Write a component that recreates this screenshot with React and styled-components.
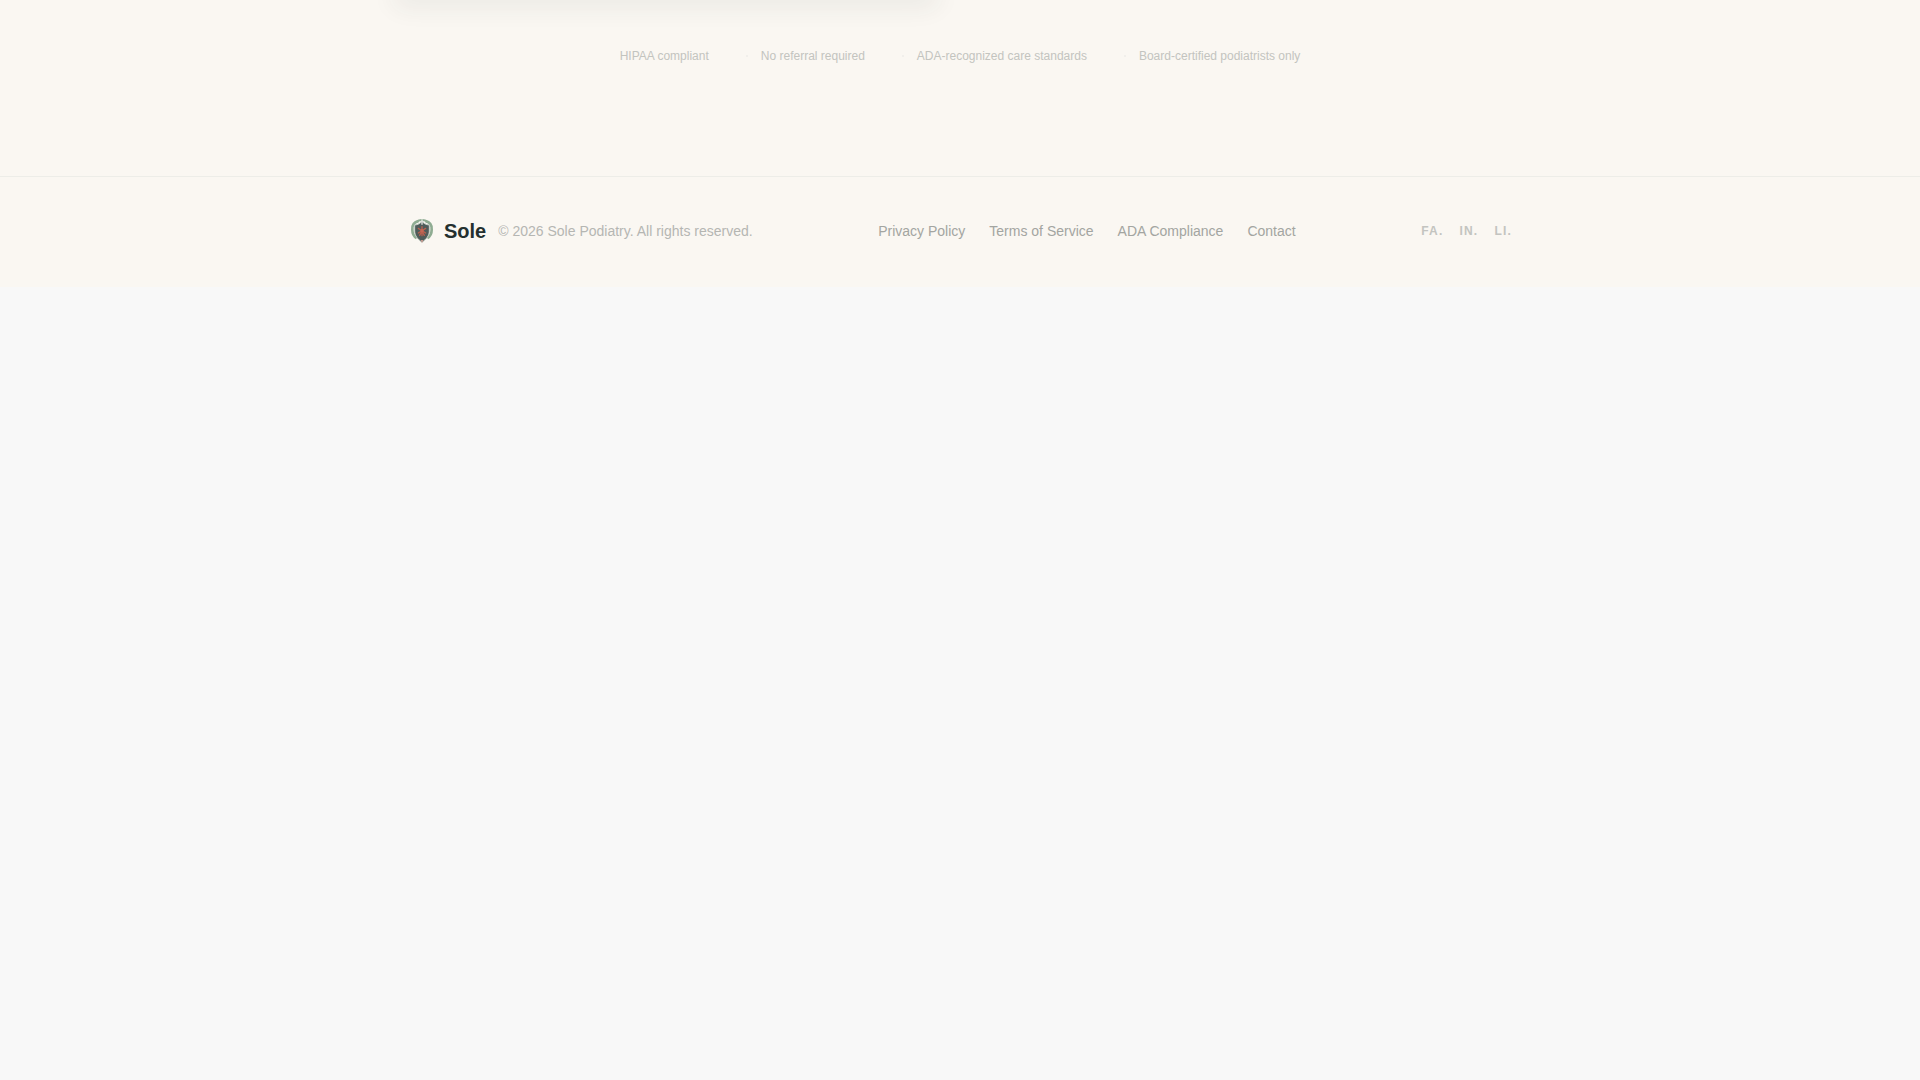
import React from "react";
import styled, { createGlobalStyle } from "styled-components";

const Global = createGlobalStyle`
  * { box-sizing: border-box; }
  body {
    margin: 0;
    background: #f8f8f8;
    font-family: "Liberation Sans", Arial, sans-serif;
    -webkit-font-smoothing: antialiased;
  }
`;

const Section = styled.section`
  background: #faf7f2;
  padding-bottom: 112px;
  overflow: hidden;
`;

const Container = styled.div`
  max-width: 1200px;
  margin: 0 auto;
  padding: 0 48px;
`;

const CardGrid = styled.div`
  display: grid;
  grid-template-columns: 1fr 1fr;
  gap: 40px;
  margin: 0 -16px;
`;

const Card = styled.div`
  height: 24px;
  margin-top: -32px;
  border-radius: 24px;
  background: #ffffff;
  box-shadow: 0 16px 24px rgba(45, 62, 58, 0.07);
`;

const TrustList = styled.ul`
  display: flex;
  justify-content: center;
  gap: 37px;
  margin: 48px 0 0;
  padding: 0;
  list-style: none;
`;

const TrustItem = styled.li`
  display: flex;
  align-items: center;
  font-size: 12px;
  line-height: 16px;
  color: #c3c4bf;

  & + &::before {
    content: "";
    width: 2px;
    height: 2px;
    margin-right: 13px;
    border-radius: 1px;
    background: #eeede8;
  }
`;

const Footer = styled.footer`
  background: #faf7f2;
  border-top: 1px solid #edede8;
  padding: 40px 0 42px;
`;

const FooterRow = styled(Container)`
  display: flex;
  align-items: center;
  justify-content: space-between;
`;

const Brand = styled.div`
  display: flex;
  align-items: center;
  gap: 12px;
`;

const Home = styled.a`
  display: flex;
  align-items: center;
  gap: 8px;
  color: #24302f;
  font-size: 20px;
  line-height: 28px;
  font-weight: 700;
  text-decoration: none;
`;

const Copyright = styled.span`
  font-size: 14px;
  line-height: 20px;
  color: #b5b6b2;
`;

const Links = styled.nav`
  display: flex;
  gap: ${(p) => p.$gap};
`;

const FooterLink = styled.a`
  font-size: 14px;
  line-height: 20px;
  color: #a3a5a1;
  text-decoration: none;
`;

const SocialLink = styled.a`
  font-size: 12px;
  line-height: 16px;
  font-weight: 700;
  letter-spacing: 0.1em;
  color: #c3c4c0;
  text-decoration: none;
`;

const Logo = () => (
  <svg width="28" height="28" viewBox="0 0 84 84" aria-hidden="true">
    <path d="M32 12 C18 15 12 25 13 38 C13 49 17 58 26 63" fill="none" stroke="#8fac92" strokeWidth="8" />
    <path d="M52 12 C66 15 72 25 71 38 C71 49 67 58 58 63" fill="none" stroke="#8fac92" strokeWidth="8" />
    <path d="M24 17 C29 10 35 9 42 9 C49 9 55 10 60 17" fill="none" stroke="#8fac92" strokeWidth="6" />
    <path
      d="M42 13 C47 20 54 23 64 24 V42 C64 57 54 67 42 76 C30 67 20 57 20 42 V24 C30 23 37 20 42 13 Z"
      fill="#4f5c5a"
      stroke="#c9d1c8"
      strokeWidth="3"
    />
    <path d="M42 29 V56 M31 34 L53 48 M53 34 L31 48 M42 42 L35 55 M42 42 L49 55" fill="none" stroke="#b9604f" strokeWidth="4" strokeLinecap="round" />
    <circle cx="42" cy="41" r="5" fill="#c36755" />
    <path d="M42 7 V23" stroke="#e6e8e2" strokeWidth="4" />
    <path d="M38 69 L42 78 L46 69" fill="#c79a90" />
  </svg>
);

const trust = [
  "HIPAA compliant",
  "No referral required",
  "ADA-recognized care standards",
  "Board-certified podiatrists only",
];
const legal = ["Privacy Policy", "Terms of Service", "ADA Compliance", "Contact"];
const social = ["FA.", "IN.", "LI."];

export default function App() {
  return (
    <>
      <Global />
      <Section>
        <Container>
          <CardGrid>
            <Card />
          </CardGrid>
          <TrustList>
            {trust.map((t) => (
              <TrustItem key={t}>{t}</TrustItem>
            ))}
          </TrustList>
        </Container>
      </Section>
      <Footer>
        <FooterRow>
          <Brand>
            <Home href="#">
              <Logo />
              Sole
            </Home>
            <Copyright>© 2026 Sole Podiatry. All rights reserved.</Copyright>
          </Brand>
          <Links $gap="24px">
            {legal.map((t) => (
              <FooterLink key={t} href="#">{t}</FooterLink>
            ))}
          </Links>
          <Links $gap="16px">
            {social.map((t) => (
              <SocialLink key={t} href="#">{t}</SocialLink>
            ))}
          </Links>
        </FooterRow>
      </Footer>
    </>
  );
}
